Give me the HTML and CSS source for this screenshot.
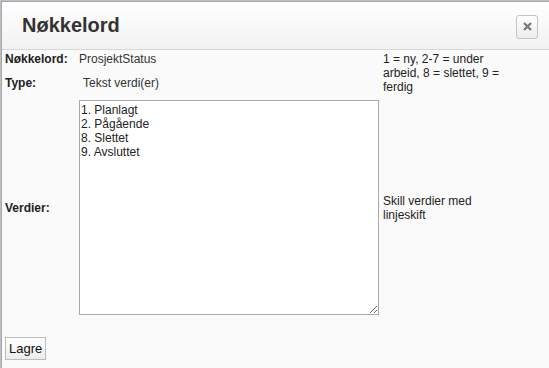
FILE: index.html
```html
<!DOCTYPE html>
<html lang="no">
<head>
    <meta charset="UTF-8">
    <title>Nøkkelord</title>
    <link rel="stylesheet" href="styles.css">
</head>
<body>

    <!-- dialog -->
    <div class="dialog">
        <div class="dialog-header">
            <h1>Nøkkelord</h1>
            <button class="close-btn" title="Lukk">
                <svg width="9" height="9" viewBox="0 0 9 9">
                    <path d="M1 1 L8 8 M8 1 L1 8" stroke="#7a7a7a" stroke-width="2.4" fill="none"/>
                </svg>
            </button>
        </div>

        <div class="dialog-body">
            <table class="form">
                <tr class="row-key">
                    <th>Nøkkelord:</th>
                    <td>ProsjektStatus</td>
                    <td class="hint" rowspan="2">1 = ny, 2-7 = under arbeid, 8 = slettet, 9 = ferdig</td>
                </tr>
                <tr class="row-type">
                    <th>Type:</th>
                    <td><span class="type">Tekst verdi(er)</span></td>
                </tr>
                <tr class="row-values">
                    <th>Verdier:</th>
                    <td><textarea class="values">1. Planlagt
2. Pågående
8. Slettet
9. Avsluttet</textarea></td>
                    <td class="hint">Skill verdier med linjeskift</td>
                </tr>
            </table>
            <button class="save-btn">Lagre</button>
        </div>
    </div>

</body>
</html>
```

FILE: styles.css
```css
* {
    box-sizing: border-box;
}
body {
    margin: 0;
    overflow: hidden;
    background-color: #b9c0cc;
    font-family: "Liberation Sans", Arial, sans-serif;
    font-size: 12px;
    color: #333;
}
.dialog {
    width: 560px;
    height: 380px;
    margin-left: 1px;
    margin-top: 1px;
    border: 1px solid #a8a8a8;
    background-color: #fafafa;
}
.dialog-header {
    display: flex;
    justify-content: space-between;
    align-items: center;
    height: 48px;
    padding: 0 22px 0 20px;
    border-bottom: 1px solid #d6d6d6;
    background: linear-gradient(#ffffff, #f2f2f2);
}
.dialog-header h1 {
    margin: 0;
    font-size: 20px;
    font-weight: bold;
    color: #333;
}
.close-btn {
    display: flex;
    align-items: center;
    justify-content: center;
    width: 22px;
    height: 24px;
    padding: 0;
    margin-top: 2px;
    border: 1px solid #c4c4c4;
    border-radius: 3px;
    background: linear-gradient(#ffffff, #ededed);
    cursor: pointer;
}
.dialog-body {
    padding: 0 1px;
}
.form {
    border-collapse: collapse;
}
.form th,
.form td {
    padding: 2px;
    line-height: 14px;
    vertical-align: middle;
}
.form th {
    width: 74px;
    text-align: left;
    font-weight: bold;
    color: #222;
}
.form .hint {
    width: 122px;
    color: #222;
}
.row-key {
    height: 18px;
}
.row-type {
    height: 28px;
}
.row-type th,
.row-type td {
    vertical-align: top;
    padding-top: 8px;
}
.form .row-values th,
.form .row-values td {
    padding-top: 4px;
}
.type {
    padding-left: 4px;
}
.values {
    display: block;
    width: 300px;
    height: 215px;
    padding: 2px 1px;
    border: 1px solid #a9a9a9;
    background-color: #fff;
    font-family: "Liberation Sans", Arial, sans-serif;
    font-size: 12px;
    line-height: 14px;
    color: #222;
}
.save-btn {
    display: block;
    height: 23px;
    margin: 20px 0 0 2px;
    padding: 0 3px;
    border: 1px solid #bdbdbd;
    background: linear-gradient(#ffffff, #ececec);
    font-family: "Liberation Sans", Arial, sans-serif;
    font-size: 13px;
    color: #111;
}
```
